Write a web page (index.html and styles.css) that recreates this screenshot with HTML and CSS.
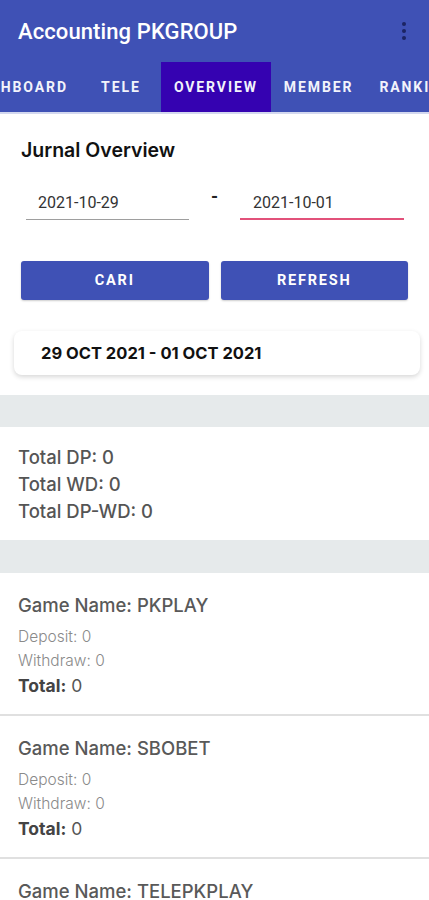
FILE: index.html
```html
<!DOCTYPE html>
<html>
<head>
<meta charset="utf-8">
<link rel="stylesheet" href="styles.css">
</head>
<body>
<header class="appbar">
  <div class="toolbar">
    <h1 class="title">Accounting PKGROUP</h1>
    <svg class="menu" width="6" height="20" viewBox="0 0 6 20"><circle cx="3" cy="3" r="2"/><circle cx="3" cy="10" r="2"/><circle cx="3" cy="17" r="2"/></svg>
  </div>
  <nav class="tabs">
    <div class="tab tab-first">DASHBOARD</div>
    <div class="tab tab-tele">TELE</div>
    <div class="tab active">OVERVIEW</div>
    <div class="tab">MEMBER</div>
    <div class="tab">RANKING</div>
  </nav>
</header>
<main>
  <section class="filter">
    <h2 class="heading">Jurnal Overview</h2>
    <div class="dates">
      <div class="field">2021-10-29</div>
      <div class="dash">-</div>
      <div class="field focused">2021-10-01</div>
    </div>
    <div class="buttons">
      <button class="btn">CARI</button>
      <button class="btn">REFRESH</button>
    </div>
    <div class="range">29 OCT 2021 - 01 OCT 2021</div>
  </section>
  <div class="band"></div>
  <section class="totals">
    <div class="total-line">Total DP: 0</div>
    <div class="total-line">Total WD: 0</div>
    <div class="total-line">Total DP-WD: 0</div>
  </section>
  <div class="band band-2"></div>
  <section class="game">
    <div class="game-name">Game Name: PKPLAY</div>
    <div class="game-sub">Deposit: 0</div>
    <div class="game-sub">Withdraw: 0</div>
    <div class="game-total"><b>Total:</b> 0</div>
  </section>
  <section class="game">
    <div class="game-name">Game Name: SBOBET</div>
    <div class="game-sub">Deposit: 0</div>
    <div class="game-sub">Withdraw: 0</div>
    <div class="game-total"><b>Total:</b> 0</div>
  </section>
  <section class="game">
    <div class="game-name">Game Name: TELEPKPLAY</div>
    <div class="game-sub">Deposit: 0</div>
    <div class="game-sub">Withdraw: 0</div>
    <div class="game-total"><b>Total:</b> 0</div>
  </section>
</main>
</body>
</html>
```
FILE: styles.css
```css
* { box-sizing: border-box; }
html, body { margin: 0; padding: 0; }
body {
  width: 429px;
  height: 900px;
  overflow: hidden;
  background: #fff;
  font-family: Inter, "Noto Sans", sans-serif;
}
.appbar {
  background: #3f51b5;
  border-bottom: 2px solid #d3d8ef;
  overflow: hidden;
}
.toolbar {
  height: 62px;
  display: flex;
  align-items: center;
  justify-content: space-between;
  padding: 0 22px 0 18px;
}
.title {
  margin: 0;
  font-family: Roboto, sans-serif;
  font-weight: 500;
  font-size: 22px;
  color: #fff;
  letter-spacing: 0.1px;
}
.menu { fill: #1c2463; }
.tabs {
  display: flex;
  height: 50px;
  margin-left: -45px;
}
.tab {
  flex: none;
  display: flex;
  align-items: center;
  justify-content: center;
  padding: 0 13px;
  font-family: Roboto, sans-serif;
  font-weight: 700;
  font-size: 14px;
  letter-spacing: 1.9px;
  color: #f2f3fb;
}
.tab-tele { min-width: 80px; }
.tab.active { background: #3502b1; }
.filter { padding: 24px 0 0; }
.heading {
  margin: 0 0 0 21px;
  font-size: 19.5px;
  line-height: 24px;
  font-weight: 600;
  color: #111;
}
.dates {
  display: grid;
  grid-template-columns: 163px 51px 164px;
  padding-left: 26px;
  margin-top: 24px;
}
.field {
  height: 34px;
  padding: 8px 0 0 12px;
  font-family: Roboto, sans-serif;
  font-size: 16px;
  line-height: 18px;
  color: #333;
  border-bottom: 1px solid #9e9e9e;
}
.field.focused {
  padding-left: 13px;
  border-bottom: 2px solid #e2517a;
}
.dash {
  text-align: center;
  font-family: Roboto, sans-serif;
  font-size: 18px;
  font-weight: 700;
  line-height: 22px;
  color: #222;
}
.buttons {
  display: grid;
  grid-template-columns: 1fr 1fr;
  gap: 12px;
  padding: 0 21px;
  margin-top: 41px;
}
.btn {
  height: 39px;
  border: 0;
  border-radius: 3px;
  background: #3f51b5;
  color: #fff;
  font-family: Roboto, sans-serif;
  font-weight: 700;
  font-size: 14.5px;
  letter-spacing: 1.8px;
  box-shadow: 0 1px 2px rgba(0,0,0,0.2);
}
.range {
  margin: 31px 9px 0 14px;
  height: 44px;
  display: flex;
  align-items: center;
  padding-left: 27px;
  background: #fff;
  border-radius: 8px;
  box-shadow: 0 2px 5px rgba(0,0,0,0.16);
  font-weight: 700;
  font-size: 16.5px;
  color: #111;
}
.band {
  height: 32px;
  margin-top: 20px;
  background: #e6eaeb;
}
.band-2 { margin-top: 0; height: 33px; }
.totals {
  padding: 17px 18px 15px;
}
.total-line {
  font-size: 18.5px;
  line-height: 27px;
  font-weight: 500;
  color: #555;
}
.game {
  padding: 21px 18px 15px;
  border-bottom: 2px solid #e0e0e0;
}
.game-name {
  font-size: 18.5px;
  line-height: 22px;
  font-weight: 500;
  color: #595959;
  margin-bottom: 9px;
}
.game-sub {
  font-size: 15.5px;
  line-height: 24px;
  font-weight: 300;
  color: #8a8a8a;
}
.game-total {
  font-size: 17.5px;
  line-height: 26px;
  color: #555;
}
.game-total b { font-weight: 700; color: #444; }
```
